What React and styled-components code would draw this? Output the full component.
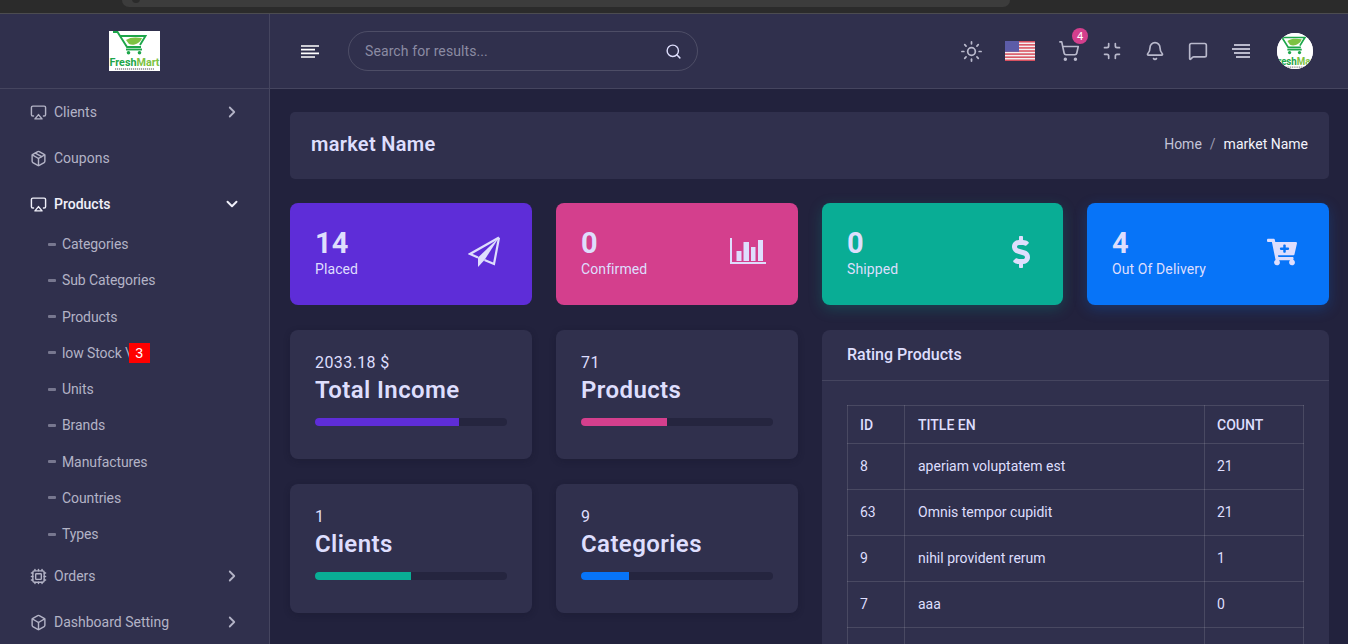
import * as React from "react";
import styled, { createGlobalStyle } from "styled-components";
import {
  Airplay,
  Bell,
  Box,
  ChevronDown,
  ChevronRight,
  Cpu,
  MessageSquare,
  Minimize,
  Package,
  Search,
  ShoppingCart,
  Sun,
} from "lucide-react";
import { FaCartPlus, FaDollarSign } from "react-icons/fa";

const GlobalStyle = createGlobalStyle`
  html, body {
    margin: 0;
    height: 100%;
    overflow: hidden;
    background: #22223d;
  }
  body {
    font-family: Roboto, "Liberation Sans", sans-serif;
    color: #dedefd;
  }
  * {
    box-sizing: border-box;
  }
`;

const subItems = ["Categories", "Sub Categories", "Products", "low Stock \\", "Units", "Brands", "Manufactures", "Countries", "Types"];

const DollarIcon = styled(FaDollarSign)`
  width: 20px;
  height: 32px;
`;

const orders = [
  { value: "14", label: "Placed", color: "#5e2dd8", icon: <PlaneIcon /> },
  { value: "0", label: "Confirmed", color: "#d43f8d", icon: <ChartIcon /> },
  { value: "0", label: "Shipped", color: "#09ad95", glow: "9, 173, 149", icon: <DollarIcon /> },
  { value: "4", label: "Out Of Delivery", color: "#0774f8", glow: "7, 116, 248", icon: <FaCartPlus size={30} /> },
];

const stats = [
  { value: "2033.18 $", title: "Total Income", color: "#5e2dd8", percent: 75 },
  { value: "71", title: "Products", color: "#d43f8d", percent: 45 },
  { value: "1", title: "Clients", color: "#09ad95", percent: 50 },
  { value: "9", title: "Categories", color: "#0774f8", percent: 25 },
];

const ratings = [
  ["8", "aperiam voluptatem est", "21"],
  ["63", "Omnis tempor cupidit", "21"],
  ["9", "nihil provident rerum", "1"],
  ["7", "aaa", "0"],
  ["\u00a0", "", ""],
];

function PlaneIcon() {
  return (
    <svg width="32" height="32" viewBox="0 0 32 32" fill="none" stroke="currentColor" strokeWidth="2.2" strokeLinejoin="miter">
      <path d="M31 1.5 2 18l8 3.5M31 1.5 26 28l-9.5-4" />
      <path d="M31 1.5 10 21.5V31l6.5-7z" fill="currentColor" stroke="none" />
    </svg>
  );
}

function ChartIcon() {
  return (
    <svg width="36" height="28" viewBox="0 0 36 28" fill="currentColor">
      <path d="M0 0h2v24h34v2H0z" />
      <rect x="6.5" y="13" width="5" height="10" />
      <rect x="13.5" y="4" width="5.5" height="19" />
      <rect x="21" y="9" width="4.5" height="14" />
      <rect x="28" y="2" width="5" height="21" />
    </svg>
  );
}

function MenuIcon() {
  return (
    <svg width="18" height="13" viewBox="0 0 18 13" stroke="currentColor" strokeWidth="1.7">
      <path d="M0 1h18M0 4.7h14M0 8.3h18M0 12h14" />
    </svg>
  );
}

function AlignIcon() {
  return (
    <svg width="18" height="14" viewBox="0 0 18 14" stroke="currentColor" strokeWidth="1.9">
      <path d="M2 1h16M0 5h18M2 9h16M4 13h14" />
    </svg>
  );
}

function FlagIcon() {
  const stripes = [0, 1, 2, 3, 4, 5, 6];
  return (
    <svg width="30" height="20" viewBox="0 0 30 20">
      <rect width="30" height="20" fill="#f4f0f2" />
      {stripes.map((i) => (
        <rect key={i} y={i * 3.08} width="30" height="1.54" fill="#d8505f" />
      ))}
      <rect width="14" height="10.8" fill="#5c5ca8" />
    </svg>
  );
}

function LogoArt({ width, height }) {
  return (
    <svg width={width} height={height} viewBox="0 0 51 40">
      <rect width="51" height="40" fill="#fff" />
      <path d="M4 1h4.5l9.5 15h14M11.5 5h25L31 14" fill="none" stroke="#1da64a" strokeWidth="1.9" />
      <path d="M17 18.5h16" fill="none" stroke="#1da64a" strokeWidth="1.9" />
      <path d="M17 9c4-3 10-3 16-2-2 6-9 8-13 6z" fill="#7cc242" />
      <circle cx="19.5" cy="21.8" r="1.8" fill="#1da64a" />
      <circle cx="30.5" cy="21.8" r="1.8" fill="#1da64a" />
      <text x="0.5" y="35" fontFamily="Roboto, sans-serif" fontSize="11.5" fontWeight="700" fill="#1da64a" textLength="50" lengthAdjust="spacingAndGlyphs">
        Fresh
        <tspan fill="#7cc242">Mart</tspan>
      </text>
      <path d="M6 38h39" stroke="#8a8a8a" strokeWidth="1.4" strokeDasharray="1.2 0.8" />
    </svg>
  );
}

export default function App() {
  return (
    <Shell>
      <GlobalStyle />
      <BrowserStrip>
        <AddressBar />
      </BrowserStrip>
      <Body>
        <Sidebar>
          <LogoArea>
            <LogoArt width={51} height={40} />
          </LogoArea>
          <Nav>
            <NavItem>
              <Airplay size={17} strokeWidth={2} />
              <NavLabel>Clients</NavLabel>
              <ChevronRight size={18} strokeWidth={2.4} />
            </NavItem>
            <NavItem>
              <Package size={17} strokeWidth={2} />
              <NavLabel>Coupons</NavLabel>
            </NavItem>
            <NavItem $active>
              <Airplay size={17} strokeWidth={2} />
              <NavLabel>Products</NavLabel>
              <ChevronDown size={18} strokeWidth={2.6} />
            </NavItem>
            {subItems.map((item) => (
              <SubItem key={item}>
                <SubDash />
                {item}
                {item.startsWith("low") && <RedBadge>3</RedBadge>}
              </SubItem>
            ))}
            <NavItem>
              <Cpu size={17} strokeWidth={2} />
              <NavLabel>Orders</NavLabel>
              <ChevronRight size={18} strokeWidth={2.4} />
            </NavItem>
            <NavItem>
              <Box size={17} strokeWidth={2} />
              <NavLabel>Dashboard Setting</NavLabel>
              <ChevronRight size={18} strokeWidth={2.4} />
            </NavItem>
          </Nav>
        </Sidebar>
        <Content>
          <Topbar>
            <MenuButton>
              <MenuIcon />
            </MenuButton>
            <SearchBox>
              <SearchInput placeholder="Search for results..." />
              <Search size={17} color="#dedefd" />
            </SearchBox>
            <TopIcons>
              <TopIcon>
                <Sun size={23} strokeWidth={1.8} />
              </TopIcon>
              <TopIcon $wide>
                <FlagIcon />
              </TopIcon>
              <TopIcon>
                <ShoppingCart size={22} strokeWidth={1.8} />
                <CartBadge>4</CartBadge>
              </TopIcon>
              <TopIcon>
                <Minimize size={20} strokeWidth={2} />
              </TopIcon>
              <TopIcon>
                <Bell size={20} strokeWidth={2} />
              </TopIcon>
              <TopIcon>
                <MessageSquare size={20} strokeWidth={2} />
              </TopIcon>
              <TopIcon>
                <AlignIcon />
              </TopIcon>
              <Avatar>
                <LogoArt width={46} height={36} />
              </Avatar>
            </TopIcons>
          </Topbar>
          <Main>
            <PageHeader>
              <PageTitle>market Name</PageTitle>
              <Breadcrumb>
                <span>Home</span>
                <Slash>/</Slash>
                <CurrentCrumb>market Name</CurrentCrumb>
              </Breadcrumb>
            </PageHeader>
            <OrderGrid>
              {orders.map((order) => (
                <OrderCard key={order.label} $color={order.color} $glow={order.glow}>
                  <div>
                    <OrderValue>{order.value}</OrderValue>
                    <OrderLabel>{order.label}</OrderLabel>
                  </div>
                  <OrderIcon>{order.icon}</OrderIcon>
                </OrderCard>
              ))}
            </OrderGrid>
            <LowerGrid>
              <StatGrid>
                {stats.map((stat) => (
                  <StatCard key={stat.title}>
                    <StatValue>{stat.value}</StatValue>
                    <StatTitle>{stat.title}</StatTitle>
                    <Track>
                      <Fill $color={stat.color} style={{ width: `${stat.percent}%` }} />
                    </Track>
                  </StatCard>
                ))}
              </StatGrid>
              <TableCard>
                <TableTitle>Rating Products</TableTitle>
                <TableWrap>
                  <RatingTable>
                    <colgroup>
                      <col style={{ width: 57 }} />
                      <col style={{ width: 300 }} />
                      <col style={{ width: 99 }} />
                    </colgroup>
                    <thead>
                      <tr>
                        <HeadCell>ID</HeadCell>
                        <HeadCell>TITLE EN</HeadCell>
                        <HeadCell>COUNT</HeadCell>
                      </tr>
                    </thead>
                    <tbody>
                      {ratings.map((row, i) => (
                        <tr key={i}>
                          {row.map((cell, j) => (
                            <Cell key={j}>{cell}</Cell>
                          ))}
                        </tr>
                      ))}
                    </tbody>
                  </RatingTable>
                </TableWrap>
              </TableCard>
            </LowerGrid>
          </Main>
        </Content>
      </Body>
    </Shell>
  );
}

const Shell = styled.div`
  display: flex;
  flex-direction: column;
  height: 644px;
  overflow: hidden;
`;

const BrowserStrip = styled.div`
  height: 14px;
  flex: none;
  padding: 0 338px 0 122px;
  background: #2b2b2b;
  border-bottom: 1px solid #4c4c50;
`;

const AddressBar = styled.div`
  position: relative;
  height: 7px;
  background: #3c3c3c;
  border-radius: 0 0 12px 12px;
  &::before {
    content: "";
    position: absolute;
    top: -5px;
    left: 10px;
    width: 8px;
    height: 8px;
    border-radius: 50%;
    background: #2b2b2b;
  }
`;

const Body = styled.div`
  display: flex;
  flex: 1;
  min-height: 0;
`;

const Sidebar = styled.aside`
  width: 270px;
  flex: none;
  background: #30304d;
  border-right: 1px solid rgba(255, 255, 255, 0.1);
  overflow: hidden;
`;

const LogoArea = styled.div`
  display: flex;
  align-items: center;
  justify-content: center;
  height: 75px;
  border-bottom: 1px solid rgba(255, 255, 255, 0.1);
`;

const Nav = styled.nav`
  display: flex;
  flex-direction: column;
`;

const NavItem = styled.div`
  display: flex;
  align-items: center;
  flex: none;
  height: 46px;
  padding: 0 28px 0 30px;
  font-size: 14px;
  color: ${(props) => (props.$active ? "#f0f0fa" : "#b3b3c6")};
  font-weight: ${(props) => (props.$active ? 500 : 400)};
`;

const NavLabel = styled.span`
  flex: 1;
  margin-left: 7px;
`;

const SubItem = styled.div`
  display: flex;
  align-items: center;
  flex: none;
  height: 36.25px;
  padding: 0 0 2px 48px;
  font-size: 14px;
  letter-spacing: -0.1px;
  color: #b3b3c6;
`;

const SubDash = styled.span`
  width: 8px;
  height: 3px;
  margin-right: 6px;
  background: #77778f;
  border-radius: 1px;
`;

const RedBadge = styled.span`
  display: flex;
  align-items: center;
  justify-content: center;
  width: 21px;
  height: 20px;
  margin-left: -2px;
  background: #ff0000;
  color: #ffffff;
  font-family: "Liberation Sans", sans-serif;
`;

const Content = styled.div`
  display: flex;
  flex-direction: column;
  flex: 1;
  min-width: 0;
`;

const Topbar = styled.header`
  display: flex;
  align-items: center;
  flex: none;
  height: 75px;
  padding: 0 35px 0 31px;
  background: #30304d;
  border-bottom: 1px solid rgba(255, 255, 255, 0.1);
`;

const MenuButton = styled.div`
  display: flex;
  color: #ffffff;
  margin-right: 29px;
`;

const SearchBox = styled.div`
  display: flex;
  align-items: center;
  width: 350px;
  height: 40px;
  padding: 0 15px 0 16px;
  border: 1px solid rgba(255, 255, 255, 0.14);
  border-radius: 20px;
`;

const SearchInput = styled.input`
  flex: 1;
  min-width: 0;
  padding: 0;
  background: transparent;
  border: 0;
  outline: 0;
  font: inherit;
  font-size: 14px;
  letter-spacing: 0.1px;
  color: #dedefd;
  &::placeholder {
    color: #8b8ba3;
    opacity: 1;
  }
`;

const TopIcons = styled.div`
  display: flex;
  align-items: center;
  gap: 21px;
  margin-left: auto;
`;

const TopIcon = styled.div`
  position: relative;
  display: flex;
  align-items: center;
  justify-content: center;
  width: ${(props) => (props.$wide ? "34px" : "22px")};
  height: 24px;
  color: #b9b9cc;
  svg {
    flex: none;
  }
`;

const CartBadge = styled.span`
  position: absolute;
  top: -11px;
  right: -8px;
  display: flex;
  align-items: center;
  justify-content: center;
  width: 16px;
  height: 16px;
  border-radius: 50%;
  background: #d43f8d;
  color: #ffffff;
  font-size: 11px;
`;

const Avatar = styled.div`
  display: flex;
  align-items: center;
  justify-content: center;
  width: 36px;
  height: 36px;
  margin-left: 4px;
  border-radius: 50%;
  background: #ffffff;
  overflow: hidden;
  svg {
    flex: none;
  }
`;

const Main = styled.main`
  display: flex;
  flex-direction: column;
  flex: 1;
  padding: 23px 19px 0 20px;
  min-height: 0;
`;

const PageHeader = styled.div`
  display: flex;
  align-items: center;
  justify-content: space-between;
  flex: none;
  height: 67px;
  padding: 0 21px 3px;
  background: #30304d;
  border-radius: 5px;
`;

const PageTitle = styled.h1`
  margin: 0;
  font-size: 20px;
  font-weight: 600;
  letter-spacing: 0.3px;
`;

const Breadcrumb = styled.div`
  display: flex;
  font-size: 14px;
  color: #c4c4d8;
`;

const Slash = styled.span`
  margin: 0 8px;
  color: #9a9ab0;
`;

const CurrentCrumb = styled.span`
  color: #f4f4fc;
`;

const OrderGrid = styled.div`
  display: grid;
  grid-template-columns: 242px 242px 241px 242px;
  gap: 24px;
  flex: none;
  margin-top: 24px;
`;

const OrderCard = styled.div`
  display: flex;
  align-items: flex-start;
  justify-content: space-between;
  height: 102px;
  padding: 24px 32px 0 25px;
  background: ${(props) => props.$color};
  border-radius: 8px;
  box-shadow: ${(props) => (props.$glow ? `0 4px 14px rgba(${props.$glow}, 0.25)` : "none")};
`;

const OrderValue = styled.div`
  font-size: 29px;
  line-height: 32px;
  font-weight: 700;
`;

const OrderLabel = styled.div`
  font-size: 14px;
  line-height: 20px;
  letter-spacing: 0.1px;
`;

const OrderIcon = styled.div`
  display: flex;
  align-items: center;
  height: 32px;
  margin-top: 9px;
  color: #dedefd;
`;

const LowerGrid = styled.div`
  display: grid;
  grid-template-columns: 508px 507px;
  gap: 24px;
  flex: none;
  margin-top: 25px;
`;

const StatGrid = styled.div`
  display: grid;
  grid-template-columns: 242px 242px;
  grid-auto-rows: 129px;
  gap: 25px 24px;
  align-content: start;
`;

const StatCard = styled.div`
  padding: 23px 25px 0;
  background: #30304d;
  border-radius: 8px;
  box-shadow: 0 2px 6px rgba(20, 20, 40, 0.3);
`;

const StatValue = styled.div`
  font-size: 16px;
  line-height: 20px;
  letter-spacing: 0.4px;
`;

const StatTitle = styled.div`
  font-size: 24px;
  line-height: 34px;
  font-weight: 600;
  letter-spacing: 0.4px;
`;

const Track = styled.div`
  height: 8px;
  margin-top: 11px;
  background: #25253f;
  border-radius: 4px;
  overflow: hidden;
`;

const Fill = styled.div`
  height: 100%;
  background: ${(props) => props.$color};
`;

const TableCard = styled.div`
  background: #30304d;
  border-radius: 8px;
`;

const TableTitle = styled.h3`
  display: flex;
  align-items: center;
  height: 51px;
  margin: 0;
  padding: 0 25px 2px;
  font-size: 16px;
  font-weight: 500;
  border-bottom: 1px solid rgba(255, 255, 255, 0.1);
`;

const TableWrap = styled.div`
  padding: 24px 25px;
`;

const RatingTable = styled.table`
  width: 456px;
  table-layout: fixed;
  border-collapse: collapse;
  font-size: 14px;
`;

const HeadCell = styled.th`
  height: 38px;
  padding: 0 12px;
  text-align: left;
  font-weight: 500;
  border: 1px solid rgba(255, 255, 255, 0.12);
  &:nth-child(2) {
    padding-left: 13px;
  }
`;

const Cell = styled.td`
  height: 46px;
  padding: 0 12px 2px;
  border: 1px solid rgba(255, 255, 255, 0.12);
  &:nth-child(2) {
    padding-left: 13px;
  }
`;
